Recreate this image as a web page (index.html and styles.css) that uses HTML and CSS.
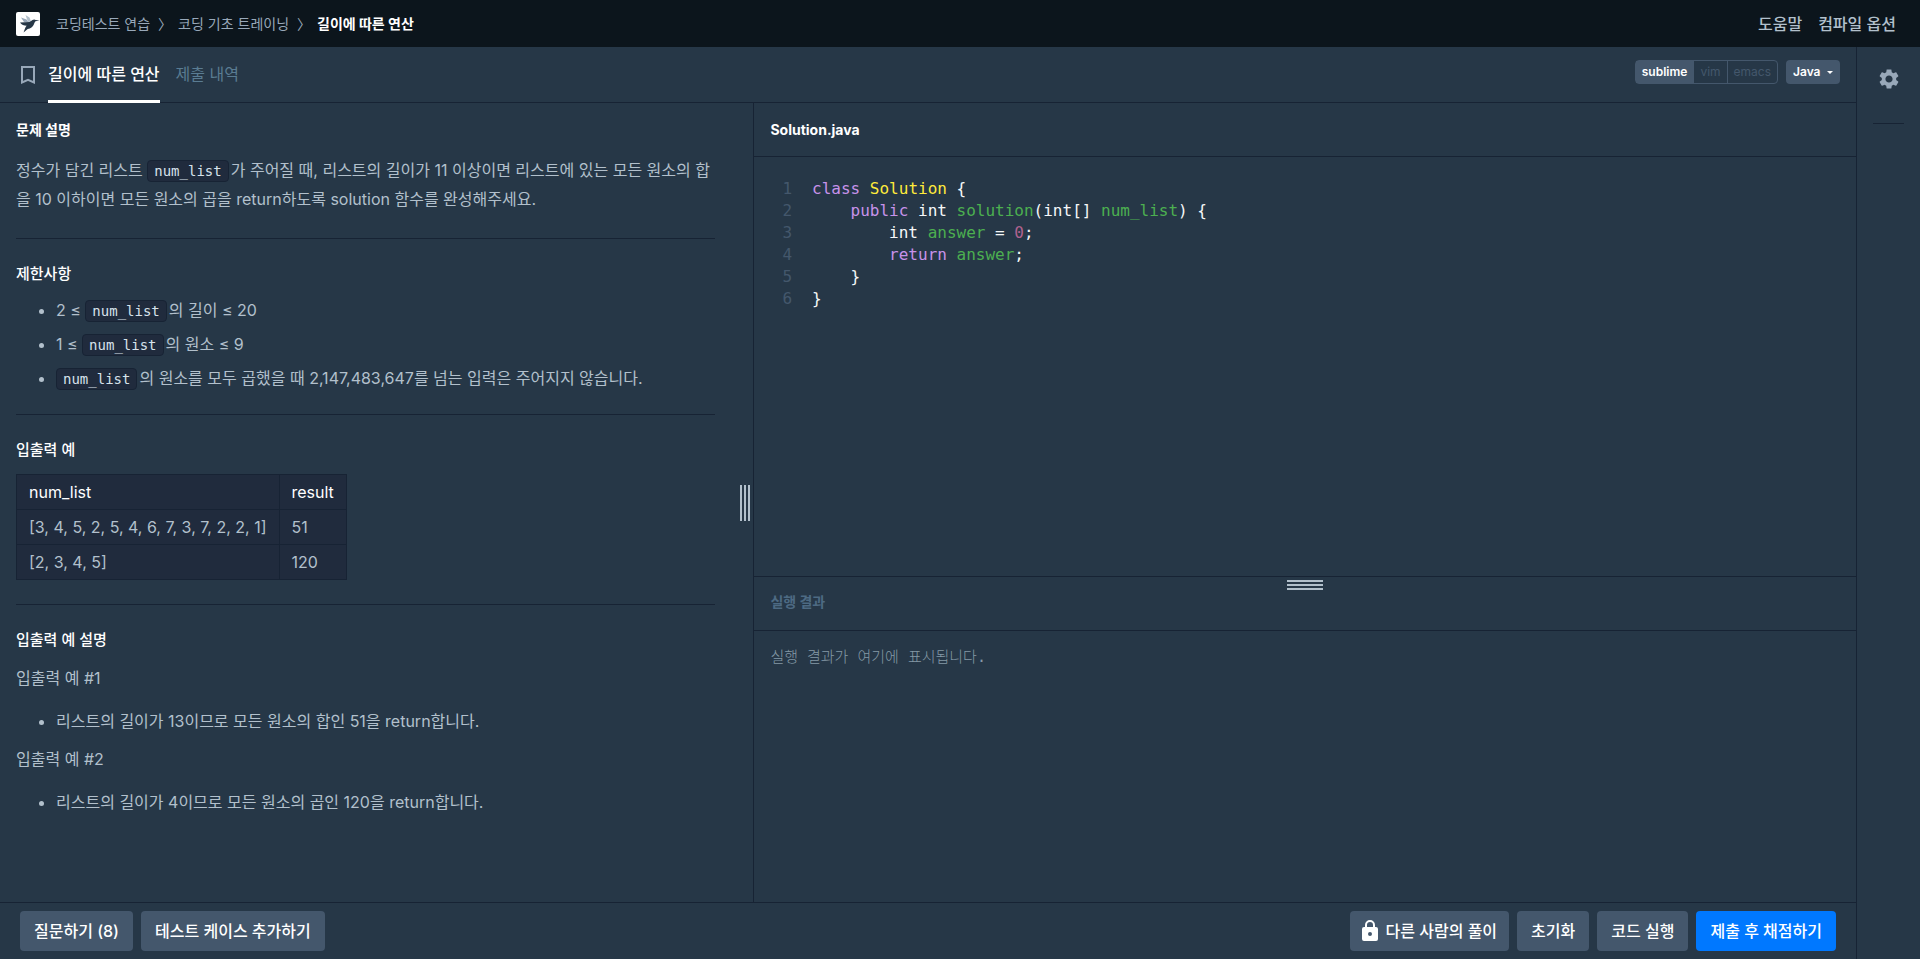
FILE: index.html
```html
<!DOCTYPE html>
<html lang="ko">
<head>
    <meta charset="UTF-8">
    <meta name="viewport" content="width=device-width, initial-scale=1.0">
    <title>코딩테스트 연습 - 길이에 따른 연산</title>
    <link rel="stylesheet" href="styles.css">
</head>
<body>
    <header class="navbar">
        <a href="#" class="logo" aria-label="홈">
            <svg width="24" height="24" viewBox="0 0 24 24">
                <rect width="24" height="24" rx="2" fill="#fff"/>
                <path d="M5 5.500l5.500 2 2 2.500H8z" fill="#98a8b9"/>
                <path d="M9.500 3l4 2.500 1.500 4-3 .5z" fill="#b2c0cc"/>
                <path d="M4 10.500l9.500-.5 3-2c1-.8 2.300-.8 3.200 0l3.800.5-4 .8c-.8.700-1.200 2-1.800 3.500-1 2.300-3 3.800-6 4.300L7.500 20.500l1.800-4.700c.5-1 .9-1.400 1.400-2C8 13.800 5.500 12.800 4 10.500z" fill="#263747"/>
            </svg>
        </a>
        <ol class="breadcrumb">
            <li><a href="#">코딩테스트 연습</a></li>
            <li><a href="#">코딩 기초 트레이닝</a></li>
            <li class="active">길이에 따른 연산</li>
        </ol>
        <nav class="nav-links">
            <a href="#">도움말</a>
            <a href="#">컴파일 옵션</a>
        </nav>
    </header>

    <div class="content">
        <main class="main">
            <div class="challenge-nav">
                <button type="button" class="bookmark" aria-label="북마크">
                    <svg width="14" height="18" viewBox="0 0 14 18">
                        <path d="M1 1h12v15.500l-6-2.700-6 2.700z" fill="none" stroke="#98a8b9" stroke-width="2"/>
                    </svg>
                </button>
                <nav class="tabs">
                    <a href="#" class="tab active">길이에 따른 연산</a>
                    <a href="#" class="tab">제출 내역</a>
                </nav>
                <div class="settings">
                    <div class="btn-group">
                        <button type="button" class="active">sublime</button>
                        <button type="button">vim</button>
                        <button type="button">emacs</button>
                    </div>
                    <label class="language">
                        <select aria-label="언어">
                            <option>Java</option>
                        </select>
                    </label>
                </div>
            </div>

            <div class="panels">
                <section class="description">
                    <h6>문제 설명</h6>
                    <p class="lead">정수가 담긴 리스트 <code>num_list</code>가 주어질 때, 리스트의 길이가 11 이상이면 리스트에 있는 모든 원소의 합을 10 이하이면 모든 원소의 곱을 return하도록 solution 함수를 완성해주세요.</p>
                    <hr>
                    <h6>제한사항</h6>
                    <ul>
                        <li>2 ≤ <code>num_list</code>의 길이 ≤ 20</li>
                        <li>1 ≤ <code>num_list</code>의 원소 ≤ 9</li>
                        <li><code>num_list</code>의 원소를 모두 곱했을 때 2,147,483,647를 넘는 입력은 주어지지 않습니다.</li>
                    </ul>
                    <hr>
                    <h6>입출력 예</h6>
                    <table>
                        <thead>
                            <tr><th>num_list</th><th>result</th></tr>
                        </thead>
                        <tbody>
                            <tr><td>[3, 4, 5, 2, 5, 4, 6, 7, 3, 7, 2, 2, 1]</td><td>51</td></tr>
                            <tr><td>[2, 3, 4, 5]</td><td>120</td></tr>
                        </tbody>
                    </table>
                    <hr>
                    <h6>입출력 예 설명</h6>
                    <p>입출력 예 #1</p>
                    <ul>
                        <li>리스트의 길이가 13이므로 모든 원소의 합인 51을 return합니다.</li>
                    </ul>
                    <p>입출력 예 #2</p>
                    <ul>
                        <li>리스트의 길이가 4이므로 모든 원소의 곱인 120을 return합니다.</li>
                    </ul>
                </section>
                <div class="gutter gutter-horizontal"><span></span></div>

                <section class="run-section">
                    <div class="panel-title file-name">Solution.java</div>
                    <div class="editor">
                        <div class="line"><span class="no">1</span><pre><b class="kw">class</b> <b class="type">Solution</b> {</pre></div>
                        <div class="line"><span class="no">2</span><pre>    <b class="kw">public</b> int <b class="var">solution</b>(int[] <b class="var">num_list</b>) {</pre></div>
                        <div class="line"><span class="no">3</span><pre>        int <b class="var">answer</b> = <b class="num">0</b>;</pre></div>
                        <div class="line"><span class="no">4</span><pre>        <b class="kw">return</b> <b class="var">answer</b>;</pre></div>
                        <div class="line"><span class="no">5</span><pre>    }</pre></div>
                        <div class="line"><span class="no">6</span><pre>}</pre></div>
                    </div>
                    <div class="output">
                        <div class="gutter gutter-vertical"><span></span></div>
                        <div class="panel-title output-title">실행 결과</div>
                        <pre class="console">실행 결과가 여기에 표시됩니다.</pre>
                    </div>
                </section>
            </div>

            <footer class="actions">
                <button type="button" class="btn">질문하기 (8)</button>
                <button type="button" class="btn">테스트 케이스 추가하기</button>
                <div class="actions-right">
                    <button type="button" class="btn btn-locked">
                        <svg width="16" height="24" viewBox="0 0 16 24">
                            <path d="M4 9V6a4 4 0 0 1 8 0v3" fill="none" stroke="#fff" stroke-width="2"/>
                            <path fill-rule="evenodd" d="M2 8h12a2 2 0 0 1 2 2v10a2 2 0 0 1-2 2H2a2 2 0 0 1-2-2V10a2 2 0 0 1 2-2zm6 5a2 2 0 1 0 0 4 2 2 0 0 0 0-4z" fill="#fff"/>
                        </svg>
                        다른 사람의 풀이
                    </button>
                    <button type="button" class="btn">초기화</button>
                    <button type="button" class="btn">코드 실행</button>
                    <button type="button" class="btn btn-primary">제출 후 채점하기</button>
                </div>
            </footer>
        </main>

        <aside class="sidebar">
            <button type="button" class="gear" aria-label="설정">
                <svg width="20" height="20" viewBox="2 2 20 20">
                    <path fill="#98a8b9" d="M19.140 12.940c.04-.3.060-.61.060-.94 0-.32-.02-.64-.07-.94l2.030-1.580c.18-.14.230-.41.120-.61l-1.920-3.320c-.12-.22-.37-.29-.59-.22l-2.390.96c-.5-.38-1.030-.7-1.620-.94l-.36-2.540c-.04-.24-.24-.41-.48-.41h-3.840c-.24 0-.43.170-.47.410l-.36 2.540c-.59.240-1.130.570-1.620.940l-2.390-.96c-.22-.08-.47 0-.59.220L2.740 8.870c-.12.210-.08.470.120.610l2.030 1.580c-.05.300-.09.630-.09.940s.020.640.070.940l-2.030 1.580c-.18.140-.23.410-.12.610l1.920 3.320c.12.220.37.290.59.220l2.390-.96c.5.380 1.030.7 1.620.940l.36 2.540c.05.240.24.410.48.410h3.840c.24 0 .44-.17.470-.41l.36-2.540c.59-.24 1.130-.56 1.620-.94l2.390.96c.22.080.47 0 .59-.22l1.920-3.320c.12-.22.070-.47-.12-.61l-2.010-1.580zM12 15.600c-1.980 0-3.600-1.620-3.600-3.600s1.620-3.600 3.600-3.600 3.600 1.620 3.600 3.600-1.620 3.600-3.600 3.600z"/>
                </svg>
            </button>
            <hr>
        </aside>
    </div>
</body>
</html>
```

FILE: styles.css
```css
* {
    box-sizing: border-box;
}

body {
    margin: 0;
    height: 100vh;
    display: flex;
    flex-direction: column;
    background-color: #263747;
    color: #b2c0cc;
    font-family: Inter, "Noto Sans CJK KR", sans-serif;
    font-size: 16px;
    line-height: 24px;
    word-break: break-all;
}

a {
    color: inherit;
    text-decoration: none;
}

button {
    border: 0;
    padding: 0;
    background: none;
    color: inherit;
    font-family: inherit;
    cursor: pointer;
}

svg {
    display: block;
}

/* header */
.navbar {
    display: flex;
    align-items: center;
    height: 47px;
    padding: 0 24px 0 16px;
    background-color: #0c151c;
}

.breadcrumb {
    display: flex;
    margin: 0;
    padding: 0 0 0 16px;
    list-style: none;
    font-size: 14px;
    line-height: 22px;
    color: #98a8b9;
}

.breadcrumb li:not(.active)::after {
    content: "〉";
    padding: 0 6px 0 8px;
}

.breadcrumb .active {
    color: #fff;
    font-weight: 700;
}

.nav-links {
    display: flex;
    gap: 16px;
    margin-left: auto;
    font-weight: 500;
}

/* layout */
.content {
    flex: 1;
    display: flex;
    min-height: 0;
}

.main {
    flex: 1;
    display: flex;
    flex-direction: column;
    min-width: 0;
}

.challenge-nav {
    display: flex;
    height: 56px;
    padding: 0 16px 0 21px;
    border-bottom: 1px solid #172334;
}

.bookmark {
    align-self: center;
    margin-right: 13px;
}

.tabs {
    display: flex;
    gap: 16px;
}

.tab {
    height: 56px;
    padding-top: 15px;
    color: #5a7c92;
}

.tab.active {
    color: #fff;
    font-weight: 500;
    border-bottom: 3px solid #fff;
}

.settings {
    display: flex;
    gap: 8px;
    margin: 13px 0 0 auto;
    height: 24px;
}

.settings button,
.settings select {
    font-size: 12px;
    line-height: 22px;
}

.btn-group {
    display: flex;
    border: 1px solid #44576c;
    border-radius: 4px;
    color: #44576c;
}

.btn-group button {
    padding: 0 6px;
}

.btn-group button + button {
    border-left: 1px solid #44576c;
}

.btn-group .active,
.language {
    background-color: #44576c;
    color: #fff;
    font-weight: 600;
}

.language {
    display: flex;
    align-items: center;
    gap: 6px;
    padding: 0 7px;
    border-radius: 4px;
}

.language select {
    appearance: none;
    padding: 0;
    border: 0;
    background: none;
    color: inherit;
    font-family: inherit;
    font-weight: inherit;
}

.language::after {
    content: "";
    border: 3px solid transparent;
    border-top-color: #fff;
    border-bottom: 0;
}

.panels {
    flex: 1;
    display: flex;
    min-height: 0;
}

/* problem description */
.description {
    flex: 0 0 40%;
    padding: 15px 27px 0 16px;
    overflow: hidden;
}

.description h6 {
    margin: 0;
    font-size: 15px;
    line-height: 24px;
    font-weight: 500;
    color: #fff;
}

.description h6:first-child {
    font-size: 14px;
    font-weight: 700;
}

.description p {
    margin: 12px 0 0;
    line-height: 29px;
}

.description .lead {
    margin-top: 14px;
}

.description hr {
    margin: 24px 0 23px;
    border: 0;
    border-top: 1px solid #172334;
}

.description ul {
    margin: 12px 0 0;
    padding-left: 40px;
}

.description p + ul {
    margin-top: 16px;
}

.description li + li {
    margin-top: 10px;
}

code {
    display: inline-block;
    margin-right: 2px;
    padding: 0 6px;
    border: 1px solid #172334;
    border-radius: 4px;
    background-color: #202b3d;
    color: #d7e2eb;
    font-family: "DejaVu Sans Mono", monospace;
    font-size: 14px;
    line-height: 20px;
}

table {
    margin-top: 12px;
    border-collapse: collapse;
    background-color: #202b3d;
}

th,
td {
    padding: 5px 12px;
    border: 1px solid #172334;
    text-align: left;
}

th {
    color: #fff;
    font-weight: 400;
}

/* resize handles */
.gutter {
    display: flex;
    align-items: center;
    justify-content: center;
}

.gutter span {
    flex-shrink: 0;
    border: solid #b2c0cc;
}

.gutter-horizontal {
    width: 14px;
    margin-left: -3px;
    padding-right: 3px;
}

.gutter-horizontal span {
    width: 10px;
    height: 36px;
    border-width: 0 2px;
    background: linear-gradient(#b2c0cc, #b2c0cc) center / 2px 100% no-repeat;
}

.gutter-vertical {
    position: absolute;
    top: 3px;
    left: 0;
    right: 0;
}

.gutter-vertical span {
    width: 36px;
    height: 10px;
    border-width: 2px 0;
    background: linear-gradient(#b2c0cc, #b2c0cc) center / 100% 2px no-repeat;
}

/* editor and output */
.run-section {
    flex: 1;
    display: flex;
    flex-direction: column;
    min-width: 0;
    border-left: 1px solid #172334;
}

.panel-title {
    height: 54px;
    padding: 15px 16px;
    border-bottom: 1px solid #172334;
    font-size: 14px;
    font-weight: 700;
}

.file-name {
    color: #fff;
}

.editor {
    flex: 11 1 0;
    min-height: 0;
    overflow: hidden;
    padding: 21px 24px 0 28px;
    font-family: "DejaVu Sans Mono", monospace;
    font-size: 16px;
    line-height: 22px;
}

.line {
    display: flex;
    gap: 20px;
}

.line .no {
    color: #44576c;
}

.line pre {
    margin: 0;
    color: #f5f7f9;
    font: inherit;
}

.line b {
    font-weight: 400;
}

.line .kw {
    color: #c792ea;
}

.line .type {
    color: #ffeb3b;
}

.line .var {
    color: #4caf50;
}

.line .num {
    color: #b0628f;
}

.output {
    position: relative;
    flex: 9 1 0;
    min-height: 0;
    border-top: 1px solid #172334;
}

.output-title {
    padding-top: 13px;
    color: #4d6a83;
}

.console {
    margin: 0;
    padding: 14px 16px;
    color: #8499a6;
    font-family: "DejaVu Sans Mono", "Noto Sans CJK KR", monospace;
    font-size: 15px;
    font-weight: 300;
}

/* bottom buttons */
.actions {
    display: flex;
    gap: 8px;
    height: 57px;
    padding: 8px 20px;
    border-top: 1px solid #172334;
}

.actions-right {
    display: flex;
    gap: 8px;
    margin-left: auto;
}

.btn {
    height: 40px;
    padding: 0 14px;
    border-radius: 4px;
    background-color: #44576c;
    color: #fff;
    font-size: 16px;
    font-weight: 500;
    line-height: 24px;
}

.btn-locked {
    display: flex;
    align-items: center;
    gap: 8px;
    padding: 0 12px;
}

.btn-primary {
    background-color: #0078ff;
}

/* right sidebar */
.sidebar {
    width: 64px;
    padding: 22px 16px 0;
    border-left: 1px solid #172334;
}

.gear {
    display: block;
    margin: 0 auto;
}

.sidebar hr {
    margin: 34px 0 0;
    border: 0;
    border-top: 1px solid #172334;
}
```
